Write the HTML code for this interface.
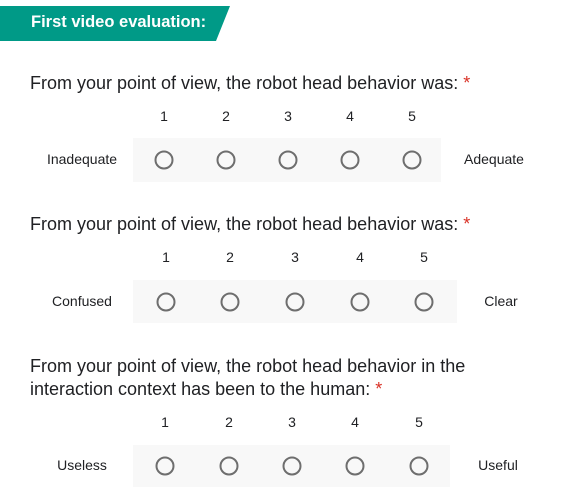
<!DOCTYPE html>
<html><head><style>
body{margin:0;width:573px;height:503px;background:#fff;position:relative;overflow:hidden;font-family:"Liberation Sans",Roboto,sans-serif;color:#202124}
.a{position:absolute;white-space:nowrap}
.hdr{position:absolute;left:0;top:6px;width:230px;height:35px;background:#009a87;clip-path:polygon(0 0,230px 0,216px 35px,0 35px)}
.ht{left:31px;top:13px;color:#fff;font-weight:bold;font-size:16.5px}
.q{font-size:18px;left:30px;color:#202124}
.st{color:#d93025}
.n{font-size:14px;transform:translateX(-50%);color:#202124}
.l{font-size:14px;transform:translateX(-50%);color:#202124}
.box{position:absolute;background:#f8f8f8}
.r{position:absolute;width:15px;height:15px;border:2px solid #6e6e6e;border-radius:50%;transform:translate(-50%,-50%)}
</style></head><body>
<div class="hdr"></div><div class="a ht">First video evaluation:</div>

<div class="a q" style="top:73px">From your point of view, the robot head behavior was: <span class="st">*</span></div>
<div class="a n" style="left:164px;top:108px">1</div><div class="a n" style="left:226px;top:108px">2</div><div class="a n" style="left:288px;top:108px">3</div><div class="a n" style="left:350px;top:108px">4</div><div class="a n" style="left:412px;top:108px">5</div>
<div class="box" style="left:133px;top:138px;width:308px;height:44px"></div>
<div class="a l" style="left:82px;top:151px">Inadequate</div><div class="a l" style="left:494px;top:151px">Adequate</div>
<div class="r" style="left:164px;top:160px"></div><div class="r" style="left:226px;top:160px"></div><div class="r" style="left:288px;top:160px"></div><div class="r" style="left:350px;top:160px"></div><div class="r" style="left:412px;top:160px"></div>

<div class="a q" style="top:214px">From your point of view, the robot head behavior was: <span class="st">*</span></div>
<div class="a n" style="left:166px;top:249px">1</div><div class="a n" style="left:230px;top:249px">2</div><div class="a n" style="left:295px;top:249px">3</div><div class="a n" style="left:360px;top:249px">4</div><div class="a n" style="left:424px;top:249px">5</div>
<div class="box" style="left:133px;top:280px;width:324px;height:43px"></div>
<div class="a l" style="left:82px;top:293px">Confused</div><div class="a l" style="left:501px;top:293px">Clear</div>
<div class="r" style="left:166px;top:302px"></div><div class="r" style="left:230px;top:302px"></div><div class="r" style="left:295px;top:302px"></div><div class="r" style="left:360px;top:302px"></div><div class="r" style="left:424px;top:302px"></div>

<div class="a q" style="top:355px;line-height:23px">From your point of view, the robot head behavior in the<br>interaction context has been to the human: <span class="st">*</span></div>
<div class="a n" style="left:165px;top:414px">1</div><div class="a n" style="left:229px;top:414px">2</div><div class="a n" style="left:292px;top:414px">3</div><div class="a n" style="left:355px;top:414px">4</div><div class="a n" style="left:419px;top:414px">5</div>
<div class="box" style="left:133px;top:445px;width:317px;height:42px"></div>
<div class="a l" style="left:82px;top:457px">Useless</div><div class="a l" style="left:498px;top:457px">Useful</div>
<div class="r" style="left:165px;top:466px"></div><div class="r" style="left:229px;top:466px"></div><div class="r" style="left:292px;top:466px"></div><div class="r" style="left:355px;top:466px"></div><div class="r" style="left:419px;top:466px"></div>
</body></html>
